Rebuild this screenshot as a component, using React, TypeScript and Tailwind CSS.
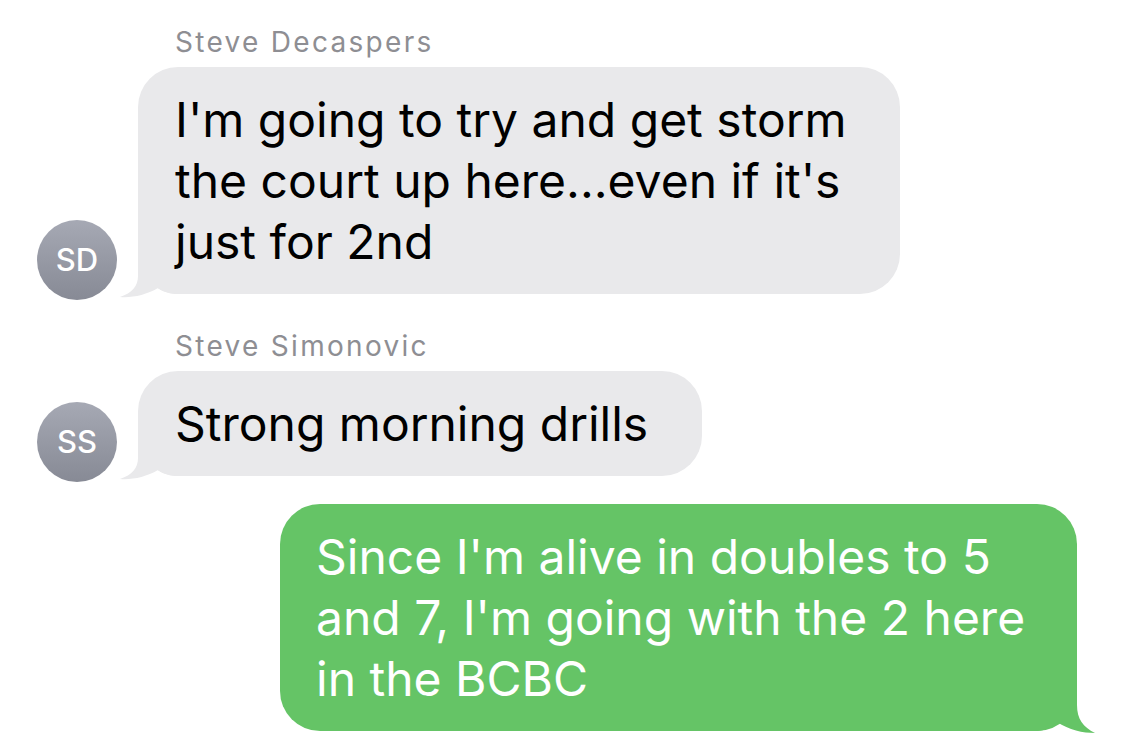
const font = { fontFamily: "Inter, 'Noto Sans', sans-serif" };

const LeftTail = () => (
	<svg className="absolute left-[-20px] bottom-[-4px]" width="60" height="50" viewBox="0 0 60 50">
		<path d="M20,0 L20,28 C20,38 14,45 2,49 C14,50 28,47 40,40 C46,44 52,46 60,46 L60,0 Z" fill="#e9e9eb" />
	</svg>
);

const RightTail = () => (
	<svg className="absolute right-[-20px] bottom-[-2px]" width="60" height="50" viewBox="0 0 60 50">
		<path d="M40,0 L40,22 C40,36 46,44 58,50 C46,50 32,47 20,39 C14,44 8,48 0,48 L0,0 Z" fill="#65c466" />
	</svg>
);

const Avatar = ({ initials }: { initials: string }) => (
	<div className="flex h-20 w-20 shrink-0 items-center justify-center rounded-full bg-gradient-to-b from-[#a6a9b4] to-[#878a95] text-[31px] font-medium text-white">
		{initials}
	</div>
);

const Incoming = ({ name, initials, lines, width }: { name: string; initials: string; lines: string[]; width: string }) => (
	<div className="flex flex-col">
		<div className="pl-[138px] text-[28px] leading-[34px] tracking-[2.3px] text-[#8e8e93]">{name}</div>
		<div className="mt-[8px] flex items-end gap-[21px]">
			<Avatar initials={initials} />
			<div className={`relative mb-[6px] rounded-[40px] bg-[#e9e9eb] py-[22px] pl-[37px] text-[48px] leading-[61px] text-black ${width}`}>
				<LeftTail />
				<div className="relative">
					{lines.map((l) => (
						<div key={l} className="whitespace-nowrap">{l}</div>
					))}
				</div>
			</div>
		</div>
	</div>
);

const App = () => {
	return (
		<div style={font} className="flex h-[749px] w-[1125px] flex-col overflow-hidden bg-white pl-[37px] pr-[48px] pt-[25px]">
			<Incoming
				name="Steve Decaspers"
				initials="SD"
				width="w-[762px]"
				lines={["I'm going to try and get storm", "the court up here...even if it's", "just for 2nd"]}
			/>
			<div className="mt-[29px]">
				<Incoming name="Steve Simonovic" initials="SS" width="w-[564px]" lines={["Strong morning drills"]} />
			</div>
			<div className="mt-[22px] flex justify-end">
				<div className="relative w-[797px] rounded-[40px] bg-[#65c466] py-[22px] pl-[36px] text-[48px] leading-[61px] text-white">
					<RightTail />
					<div className="relative">
						<div className="whitespace-nowrap">Since I'm alive in doubles to 5</div>
						<div className="whitespace-nowrap">and 7, I'm going with the 2 here</div>
						<div className="whitespace-nowrap">in the BCBC</div>
					</div>
				</div>
			</div>
		</div>
	);
};

export default App;
